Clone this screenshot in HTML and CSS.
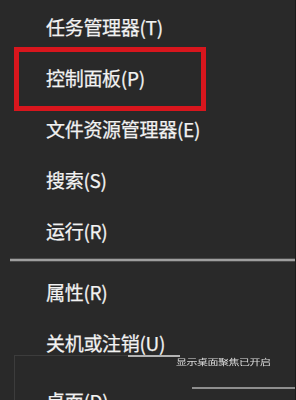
FILE: index.html
```html
<!DOCTYPE html>
<html lang="zh-CN">
<head>
<meta charset="utf-8">
<title>Win+X 菜单</title>
<link rel="stylesheet" href="styles.css">
</head>
<body>
<div class="menu">
  <ul class="group">
    <li class="item">任务管理器(T)</li>
    <li class="item">控制面板(P)</li>
    <li class="item">文件资源管理器(E)</li>
    <li class="item">搜索(S)</li>
    <li class="item">运行(R)</li>
  </ul>
  <div class="sep"></div>
  <ul class="group">
    <li class="item">属性(R)</li>
    <li class="item">关机或注销(U)</li>
    <li class="item item-last">桌面(D)</li>
  </ul>

  <div class="highlight"></div>
  <div class="ghost-frame"></div>
  <div class="ghost-line"></div>
  <div class="ghost-text">显示桌面聚焦已开启</div>
  <div class="ghost-line2"></div>
</div>
</body>
</html>
```
FILE: styles.css
```css
html, body {
  margin: 0;
  padding: 0;
  background: #292929;
}
.menu {
  position: relative;
  width: 295px;
  height: 400px;
  overflow: hidden;
  background: #292929;
  border-right: 1px solid #1b1b1b;
  font-family: "Noto Sans CJK SC", "Noto Sans", sans-serif;
  color: #f2f2f2;
}
.group {
  list-style: none;
  margin: 0;
  padding: 1px 0 0 0;
}
.item {
  height: 51px;
  line-height: 51px;
  padding-left: 46px;
  font-size: 19px;
  letter-spacing: -0.3px;
  white-space: nowrap;
  -webkit-text-stroke: 0.25px #f2f2f2;
}
.sep {
  height: 2px;
  margin: 3px 0 4px 10px;
  background: #9e9e9e;
  box-shadow: 0 -1px 0 #4a4a4a, 0 1px 0 #4a4a4a;
}
.item-last {
  margin-top: 7px;
}
.highlight {
  position: absolute;
  left: 14px;
  top: 47px;
  width: 182px;
  height: 54px;
  border: 5px solid #d8161d;
}
.ghost-frame {
  position: absolute;
  left: 14px;
  top: 355px;
  width: 120px;
  height: 60px;
  border-left: 1px solid #3c3c3c;
  border-top: 1px solid #3c3c3c;
}
.ghost-line {
  position: absolute;
  left: 128px;
  top: 355px;
  width: 52px;
  height: 2px;
  background: #b4b4b4;
}
.ghost-text {
  position: absolute;
  left: 176px;
  top: 353px;
  width: 118px;
  font-size: 11px;
  line-height: 16px;
  color: #dcdcdc;
  letter-spacing: -0.5px;
  white-space: nowrap;
  overflow: hidden;
  transform: scaleY(0.75);
  filter: blur(0.3px);
}
.ghost-line2 {
  position: absolute;
  left: 192px;
  top: 387px;
  width: 104px;
  height: 2px;
  background: #8e8e8e;
}
```
